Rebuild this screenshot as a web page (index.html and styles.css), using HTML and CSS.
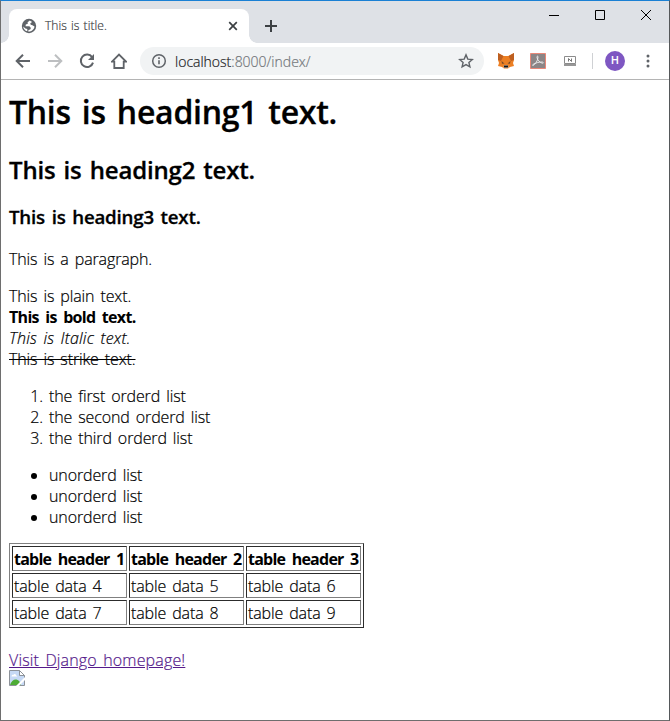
FILE: index.html
```html
<!DOCTYPE html>
<html lang="en">
<head>
<meta charset="utf-8">
<title>This is title.</title>
<link rel="stylesheet" href="styles.css">
</head>
<body>
<div class="window">
  <header class="tabstrip">
    <div class="tab">
      <svg class="globe" width="16" height="16" viewBox="0 0 16 16"><circle cx="8" cy="8" r="7.2" fill="#5f6368"/><path d="M8.8 2.4 6.6 4.3l.2 1.5-2 .8-.3 1.7h3.9l1.5 1.7-.7 1.5-1.8.4v1.8c3.5-.1 5.8-2.5 6.1-5.2L11.4 7.2l-1.7-.4-.4-1.6 1.8-1.3zM2.2 8.4l2.2 2.2 1.9.3v2.4C4 12.7 2.4 10.800 2.200 8.400z" fill="#fff"/></svg>
      <span class="tab-title">This is title.</span>
      <svg width="10" height="10" viewBox="0 0 10 10"><path d="M1.200 1.200l7.600 7.600M8.800 1.200l-7.600 7.600" stroke="#3c4043" stroke-width="1.700"/></svg>
    </div>
    <svg class="new-tab" width="14" height="14" viewBox="0 0 14 14"><path d="M7 1v12M1 7h12" stroke="#3c4043" stroke-width="2"/></svg>
    <div class="controls">
      <svg width="12" height="12" viewBox="0 0 12 12"><path d="M1 6.500h10" stroke="#000"/></svg>
      <svg width="12" height="12" viewBox="0 0 12 12"><path d="M1.500 1.500h9v9h-9z" fill="none" stroke="#000"/></svg>
      <svg width="12" height="12" viewBox="0 0 12 12"><path d="M1 1l10 10M11 1L1 11" stroke="#000"/></svg>
    </div>
  </header>
  <nav class="toolbar">
    <div class="nav-icons">
      <svg width="16" height="16" viewBox="0 0 16 16"><path d="M15 8H2M8 1.700L1.700 8 8 14.300" fill="none" stroke="#5f6368" stroke-width="2"/></svg>
      <svg width="16" height="16" viewBox="0 0 16 16"><path d="M1 8h13M8 1.700L14.300 8 8 14.300" fill="none" stroke="#bdbfc1" stroke-width="2"/></svg>
      <svg width="16" height="16" viewBox="0 0 16 16"><path d="M13.100 4.200A6.200 6.200 0 1 0 14 9.600" fill="none" stroke="#5f6368" stroke-width="2"/><path d="M15 1v6H9z" fill="#5f6368"/></svg>
      <svg width="16" height="16" viewBox="0 0 16 16"><path d="M1 8.600L8 1.600l7 7H12.700V15H3.300V8.600z" fill="none" stroke="#5f6368" stroke-width="1.800"/></svg>
    </div>
    <div class="address">
      <svg width="16" height="16" viewBox="0 0 16 16"><circle cx="8" cy="8" r="6.300" fill="none" stroke="#5f6368" stroke-width="1.500"/><path d="M8 7.200v4M8 4.300v1.600" stroke="#5f6368" stroke-width="1.600"/></svg>
      <span class="url">localhost<span class="path">:8000/index/</span></span>
      <svg width="16" height="16" viewBox="0 0 16 16"><path d="M8 1.900l1.800 4.200 4.500.4-3.400 3 1 4.400L8 11.600l-3.900 2.300 1-4.400-3.400-3 4.500-.4z" fill="none" stroke="#5f6368" stroke-width="1.400"/></svg>
    </div>
    <svg class="fox" width="18" height="16" viewBox="0 0 18 16"><path d="M1 0l5.500 3h5L17 0v7l-1 3 1 3-4 1-2 1.500H7L5 14l-4-1 1-3-1-3z" fill="#ec7f23"/><path d="M1 0l5.500 3L4 8 1 7zM17 0l-5.500 3L14 8l3-1z" fill="#bd5f20"/><path d="M4.500 8l3 2.500-2.500.3zM13.500 8l-3 2.500 2.500.3z" fill="#764a28"/><path d="M7 12h4l.5 3h-5z" fill="#d7c1b3"/><path d="M7 12.500h4v2H7z" fill="#161616"/></svg>
    <svg class="pdf" width="16" height="16" viewBox="0 0 16 16"><path d="M.5.500h15v15H.5z" fill="#8b8586" stroke="#e88777"/><path d="M3 12.500c2-1 5-4.600 5-8.500 0-1.500-1.300-1-1 .5.500 3 3 5.300 5.500 5.700 1.500.1 1-1.300-.8-1.200-3 0-6 .9-8.400 2.300-1 .6-.8 1.300-.3 1.200z" fill="none" stroke="#eee" stroke-width=".9"/></svg>
    <svg class="laptop" width="14" height="12" viewBox="0 0 14 12"><path d="M1.500 1.500h11v7h-11z" fill="#fff" stroke="#8c8c8c"/><path d="M1 10h12" stroke="#8c8c8c" stroke-width="1.800"/><path d="M5.500 6.500v-3l3 3v-3" fill="none" stroke="#777" stroke-width="1"/></svg>
    <span class="divider"></span>
    <span class="avatar">H</span>
    <svg class="menu" width="4" height="16" viewBox="0 0 4 16"><g fill="#5f6368"><circle cx="2" cy="3" r="1.500"/><circle cx="2" cy="8" r="1.500"/><circle cx="2" cy="13" r="1.500"/></g></svg>
  </nav>
  <main>
    <h1>This is heading1 text.</h1>
    <h2>This is heading2 text.</h2>
    <h3>This is heading3 text.</h3>
    <p>This is a paragraph.</p>
    <div>This is plain text.</div>
    <div><b>This is bold text.</b></div>
    <div><i>This is Italic text.</i></div>
    <div><s>This is strike text.</s></div>
    <ol><li>the first orderd list</li><li>the second orderd list</li><li>the third orderd list</li></ol>
    <ul><li>unorderd list</li><li>unorderd list</li><li>unorderd list</li></ul>
    <table>
      <tr><th>table header 1</th><th>table header 2</th><th>table header 3</th></tr>
      <tr><td>table data 4</td><td>table data 5</td><td>table data 6</td></tr>
      <tr><td>table data 7</td><td>table data 8</td><td>table data 9</td></tr>
    </table>
    <a href="#">Visit Django homepage!</a>
    <svg class="broken" width="16" height="16" viewBox="0 0 16 16"><path d="M.5.500h10l5 5v10H.5z" fill="#c6d9f5" stroke="#8d9299"/><path d="M10.500.500v5h5z" fill="#fff" stroke="#8d9299"/><path d="M2.500 6.500c0-2 1.800-2 2-1.500.5-2 3-1 2.500.5 1.500 0 1.500 1 1 1z" fill="#fff"/><path d="M1 15c1-4 4-6 6.500-5.500S11 12 12 15z" fill="#4eac35"/><path d="M7 16l9-9v3l-6 6z" fill="#fff"/></svg>
  </main>
</div>
</body>
</html>
```
FILE: styles.css
```css
* { box-sizing: border-box; }
body { margin: 0; font: 16px/21px "Open Sans", sans-serif; color: #000; }
svg { display: block; flex: none; }
.window { height: 721px; background: #fff; border: 1px solid #6e6e6e; border-top-color: #1a80d4; border-right-color: #55585a; overflow: hidden; }
.tabstrip { height: 42px; background: #dee1e6; display: flex; align-items: flex-start; }
.tab { position: relative; width: 240px; height: 34px; margin: 8px 0 0 8px; padding: 0 11px 0 12px; border-radius: 8px 8px 0 0; background: #fff; display: flex; align-items: center; }
.tab::before, .tab::after { content: ""; position: absolute; bottom: 0; width: 8px; height: 8px; }
.tab::before { left: -8px; background: radial-gradient(circle at 0 0, transparent 7.5px, #fff 8px); }
.tab::after { right: -8px; background: radial-gradient(circle at 100% 0, transparent 7.5px, #fff 8px); }
.tab-title { flex: 1; margin-left: 8px; margin-top: -1px; font-size: 12px; font-weight: 300; color: #3c4043; letter-spacing: .05px; word-spacing: 1px; -webkit-text-stroke: .2px; }
.new-tab { margin: 18px 0 0 15px; }
.controls { margin: 8px 17px 0 auto; display: flex; gap: 34px; }
.toolbar { height: 37px; border-bottom: 1px solid #b4b4b4; display: flex; align-items: center; padding-left: 14px; }
.nav-icons { display: flex; gap: 16px; }
.address { width: 344px; height: 28px; margin-left: 13px; padding: 0 10px 0 11px; border-radius: 14px; background: #f1f3f4; display: flex; align-items: center; }
.url { flex: 1; margin-left: 8px; font-size: 14px; font-weight: 300; color: #202124; -webkit-text-stroke: .2px; }
.path { color: #73777b; }
.fox { margin-left: 13px; }
.pdf { margin-left: 15px; }
.laptop { margin-left: 17px; }
.divider { width: 1px; height: 16px; margin-left: 15px; background: #cfd1d4; }
.avatar { width: 20px; height: 20px; margin-left: 12px; border-radius: 50%; background: #7e57c2; color: #fff; font: 500 11px/20px Roboto, sans-serif; text-align: center; }
.menu { margin-left: 21px; }
main { padding: 10px 8px 0; font-weight: 300; word-spacing: 2px; letter-spacing: -.12px; -webkit-text-stroke: .2px; }
h1, h2, h3, b, th { -webkit-text-stroke: 0; }
h1, h2, h3 { font-weight: 600; -webkit-text-stroke: .3px; }
h1 { font-size: 32px; line-height: 43px; margin: 0 0 21px; letter-spacing: -.27px; word-spacing: 3px; }
h2 { font-size: 24px; line-height: 32px; margin: 0 0 18px; letter-spacing: -.17px; }
h3 { font-size: 18.72px; line-height: 25px; margin: 0 0 20px; letter-spacing: -.2px; }
p { margin: 0 0 16px; }
b, th { font-weight: 700; letter-spacing: -.76px; word-spacing: 3px; }
b { letter-spacing: -.7px; }
i { letter-spacing: .19px; }
ol, ul { margin: 16px 0; padding-left: 40px; }
table { border: 1px outset #808080; border-spacing: 2px; margin: -1px 0 22px; }
td, th { width: 115px; height: 25px; padding: 2px 1px 0; border: 1px inset #808080; text-align: left; white-space: nowrap; }
a { display: table; color: #551a8b; text-decoration: underline; letter-spacing: .16px; }
.broken { margin-top: -1px; }
```
